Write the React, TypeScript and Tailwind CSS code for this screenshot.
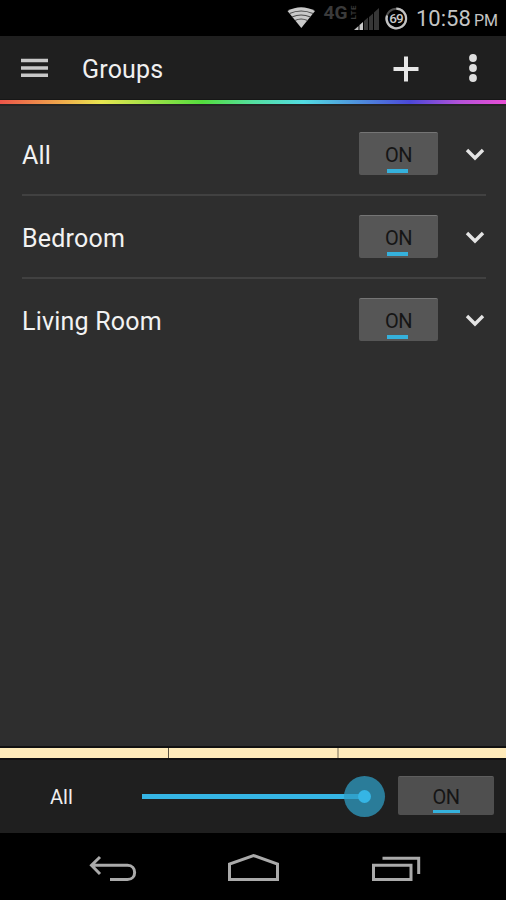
import clsx from 'clsx';

const groups = ['All', 'Bedroom', 'Living Room'];

const StatusBar = () => (
  <header className="relative h-9 shrink-0 bg-black text-[#c4c4c4]">
    <svg className="absolute left-[287px] top-[6px]" width="29" height="23" viewBox="0 0 29 23">
      <path d="M0.5 5Q14 -2.5 28 5L14.3 22Z" fill="#c9c9c9" />
      <g fill="none" stroke="#4c4c4c" strokeWidth="1.1">
        <path d="M2.5 7.5Q14 2.5 26 7.5" />
        <path d="M5 11Q14 7 23.5 11" />
        <path d="M8 14.5Q14 11.5 20.5 14.5" />
      </g>
    </svg>
    <svg className="absolute left-[321px] top-0" width="38" height="30" viewBox="-2 -5 38 30" fill="#3a3a3a" fontFamily="Roboto, sans-serif" fontWeight="700">
      <text x="0.5" y="14" fontSize="18" textLength="24" lengthAdjust="spacingAndGlyphs">4G</text>
      <text transform="translate(32.5 14.5) rotate(-90)" fontSize="8" textLength="14">LTE</text>
    </svg>
    <svg className="absolute left-[354px] top-[7px]" width="26" height="24" viewBox="0 0 26 24">
      <path d="M0 23L4.5 19V23Z" fill="#bdbdbd" />
      <path d="M5.5 18L9 15V23H5.5Z" fill="#c9c9c9" />
      <path d="M10 14L14 10.5V23H10ZM15 10L19 6.5V23H15ZM20 5.5L25 1V23H20Z" fill="#363636" />
    </svg>
    <svg className="absolute left-[384px] top-[6px]" width="24" height="25" viewBox="0 0 24 25">
      <circle cx="12.3" cy="12.5" r="9.8" fill="none" stroke="#505050" strokeWidth="2" />
      <path d="M12.3 2.7A9.8 9.8 0 1 1 3 9.5" fill="none" stroke="#c2c2c2" strokeWidth="2.2" />
      <text x="12" y="17.2" textAnchor="middle" fontSize="13.5" fontWeight="500" fontFamily="Roboto, sans-serif" fill="#c9c9c9" letterSpacing="-1">69</text>
    </svg>
    <span className="absolute left-[416px] top-[6px] text-[22px] leading-[26px]">10:58</span>
    <span className="absolute left-[474px] top-[10px] text-[16px] leading-[22px]">PM</span>
  </header>
);

const ActionBar = () => (
  <div className="flex h-[63px] shrink-0 items-center bg-[#1f1f1f] pl-[21px] pt-[3px]">
    <svg width="28" height="20" viewBox="0 0 28 20" className="-mt-[2px]">
      <path d="M0 2.5H27M0 10H27M0 17.3H27" stroke="#c8c8c8" strokeWidth="3.4" />
    </svg>
    <h1 className="ml-[33px] flex-1 pt-px text-[25px] leading-[30px] tracking-[0.2px] text-[#f0f0f0]">Groups</h1>
    <svg width="26" height="26" viewBox="0 0 26 26" className="mr-[49px] -mt-px">
      <path d="M0.5 13H25.5M13 0.5V25.5" stroke="#e6e6e6" strokeWidth="4" />
    </svg>
    <svg width="10" height="30" viewBox="0 0 10 30" className="mr-[28px] -mt-[3px]" fill="#dedede">
      <circle cx="5" cy="5" r="3.9" />
      <circle cx="5" cy="15" r="3.9" />
      <circle cx="5" cy="25" r="3.9" />
    </svg>
  </div>
);

const Toggle = ({ wide }: { wide?: boolean }) => (
  <button
    className={clsx(
      'flex shrink-0 flex-col items-center justify-end rounded-[2px] border-t text-[20px] leading-6 tracking-[-0.5px] text-[#151515]',
      wide
        ? 'h-[39px] w-24 border-[#5e5e5e] bg-[#4f4f4f] pb-[2px]'
        : 'h-[43px] w-[79px] border-[#757575] bg-[#565656] pb-[2px]',
    )}
  >
    <span className={clsx(wide ? 'mb-px' : 'mb-[2px]')}>ON</span>
    <span className={clsx('bg-[#35b1dc]', wide ? 'h-[3px] w-[27px]' : 'mr-[2px] h-[4px] w-[21px]')} />
  </button>
);

const GroupRow = ({ name, last }: { name: string; last: boolean }) => (
  <li
    className={clsx(
      'flex h-[83px] items-center border-b-2 pr-px',
      last ? 'border-transparent' : 'border-[#414141]',
    )}
  >
    <span className="flex-1 pt-[4px] text-[25px] leading-[30px] tracking-[0.2px] text-[#f2f2f2]">{name}</span>
    <Toggle />
    <svg width="20" height="14" viewBox="0 0 20 14" className="ml-[27px]">
      <path d="M2 3L10 11L18 3" fill="none" stroke="#e4e4e4" strokeWidth="3.4" />
    </svg>
  </li>
);

const NavBar = () => (
  <nav className="flex h-[67px] shrink-0 items-start bg-black pl-[89px] pt-[19px]">
    <svg width="48" height="30" viewBox="0 0 48 30" fill="none" stroke="#aaa" strokeWidth="3">
      <path d="M11 5L2.5 13.3L11 22M3 13.3H38.5C48 13.3 48 27.5 38.5 27.5H21" />
    </svg>
    <svg width="54" height="30" viewBox="0 0 54 30" fill="none" stroke="#aaa" strokeWidth="3" className="ml-[90px]">
      <path d="M2.5 27.5V12L26.5 3.5L50.5 12V27.5Z" />
    </svg>
    <svg width="51" height="30" viewBox="0 0 51 30" fill="none" stroke="#aaa" strokeWidth="3" className="ml-[90px]">
      <path d="M2.5 13.3H40V27.5H2.5ZM11.5 6.3H47.7V22" />
    </svg>
  </nav>
);

export default function App() {
  return (
    <div className="flex h-[900px] w-[506px] flex-col overflow-hidden bg-[#2e2e2e] font-['Roboto',sans-serif]">
      <StatusBar />
      <ActionBar />
      <div className="h-[5px] shrink-0 border-t border-[#171717] bg-[linear-gradient(90deg,#ec5549,#f0b04c_13%,#e8e650_20%,#54dd3e_40%,#54dfa0_50%,#52dce2_60%,#4b48d8_81%,#b552d8_91%,#e94ed6)]" />
      <div className="h-[2px] shrink-0 bg-[#242424]" />
      <ul className="flex-1 pl-[22px] pr-5 pt-[7px]">
        {groups.map((name, i) => (
          <GroupRow key={name} name={name} last={i === groups.length - 1} />
        ))}
      </ul>
      <div className="flex h-[14px] shrink-0 border-y-2 border-[#111] bg-[#ffebba]">
        <div className="w-[169px] border-r border-[#5a5342]" />
        <div className="w-[170px] border-r-2 border-[#b9ab88]" />
      </div>
      <div className="flex h-[73px] shrink-0 items-center bg-[#1f1f1f] pr-3">
        <span className="w-[142px] pl-[50px] text-[20px] leading-6 text-[#eee]">All</span>
        <div className="relative h-[5px] w-[222px] bg-[#35b5e5]">
          <div className="absolute -right-[21px] -top-[18px] flex size-[41px] items-center justify-center rounded-full bg-[#2f9cc3]/75">
            <div className="size-[13px] rounded-full bg-[#35b5e5]" />
          </div>
        </div>
        <div className="-mt-[2px] ml-auto">
          <Toggle wide />
        </div>
      </div>
      <NavBar />
    </div>
  );
}
